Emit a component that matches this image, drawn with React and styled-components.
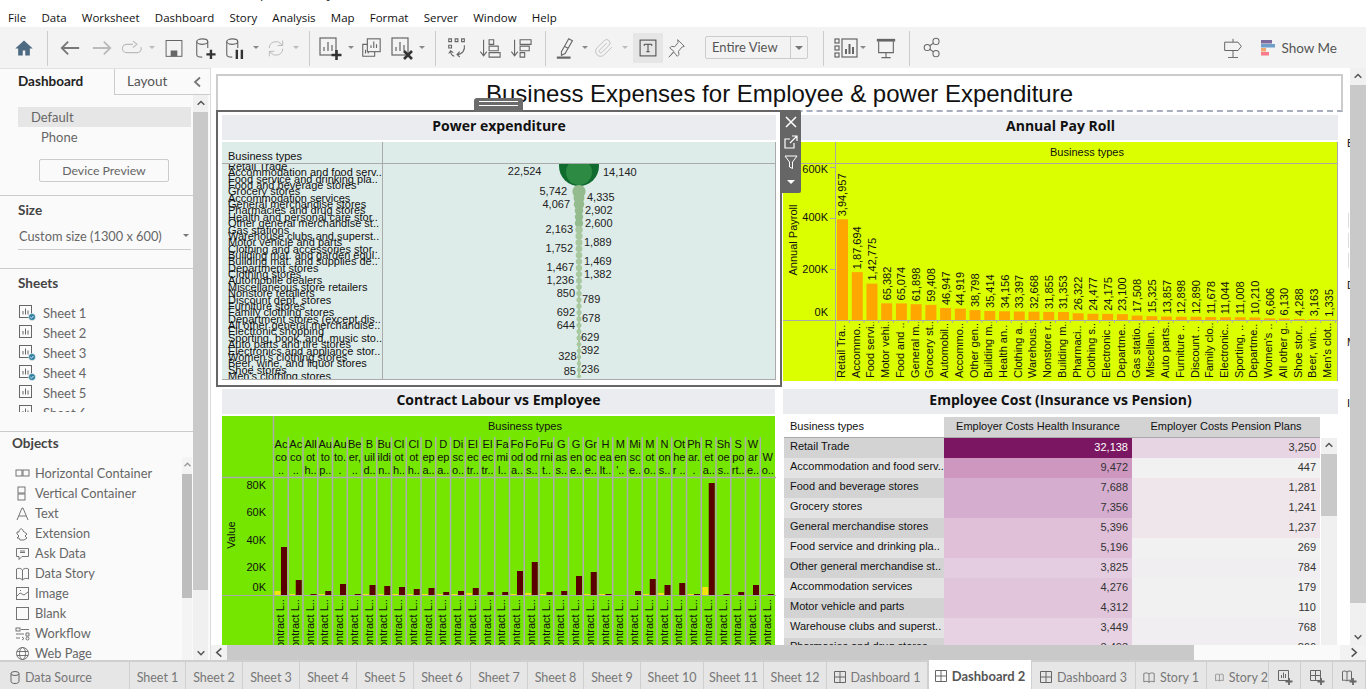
import React from 'react'
import styled, { createGlobalStyle } from 'styled-components'

const GlobalStyle = createGlobalStyle`
  html, body { margin: 0; padding: 0; background: #fff; overflow: hidden; }
  * { box-sizing: border-box; }
`

const UI_FONT = `Lato, "Open Sans", sans-serif`
const CHART_FONT = `"Liberation Sans", Arial, sans-serif`

/* ---------- data ---------- */
const menus = ['File', 'Data', 'Worksheet', 'Dashboard', 'Story', 'Analysis', 'Map', 'Format', 'Server', 'Window', 'Help']

const powerRows = ['Retail Trade', 'Accommodation and food serv..', 'Food service and drinking pla..', 'Food and beverage stores', 'Grocery stores', 'Accommodation services', 'General merchandise stores', 'Pharmacies and drug stores', 'Health and personal care stor..', 'Other general merchandise st..', 'Gas stations', 'Warehouse clubs and superst..', 'Motor vehicle and parts', 'Clothing and accessories stor..', 'Building mat. and garden equi..', 'Building mat. and supplies de..', 'Department stores', 'Clothing stores', 'Automobile dealers', 'Miscellaneous store retailers', 'Nonstore retailers', 'Discount dept. stores', 'Furniture stores', 'Family clothing stores', 'Department stores (except dis..', 'All other general merchandise..', 'Electronic shopping', 'Sporting, book, and, music sto..', 'Auto parts and tire stores', 'Electronics and appliance stor..', "Women's clothing stores", 'Beer, wine, and liquor stores', 'Shoe stores', "Men's clothing stores"]

const powerDots = [[4, 5742], [5, 4335], [6, 4067], [7, 2902], [8, 2700], [9, 2600], [10, 2163], [11, 2000], [12, 1889], [13, 1752], [14, 1600], [15, 1469], [16, 1467], [17, 1382], [18, 1236], [19, 1000], [20, 850], [21, 789], [22, 720], [23, 692], [24, 678], [25, 644], [26, 635], [27, 629], [28, 500], [29, 392], [30, 328], [31, 280], [32, 236], [33, 85]]

const powerLabels = [
  ['22,524', 541.5, 175, 'end'], ['14,140', 603, 176, 'start'], ['5,742', 567, 195, 'end'], ['4,335', 587, 201, 'start'],
  ['4,067', 570, 208, 'end'], ['2,902', 585, 214, 'start'], ['2,600', 585, 227, 'start'], ['2,163', 573, 233, 'end'],
  ['1,889', 584, 246, 'start'], ['1,752', 573, 252, 'end'], ['1,469', 584, 265, 'start'], ['1,467', 574, 271, 'end'],
  ['1,382', 584, 278, 'start'], ['1,236', 574, 284, 'end'], ['850', 575, 297, 'end'], ['789', 582, 303, 'start'],
  ['692', 575, 316, 'end'], ['678', 582, 322, 'start'], ['644', 575, 329, 'end'], ['629', 581, 341, 'start'],
  ['392', 581, 354, 'start'], ['328', 576.5, 360, 'end'], ['236', 581, 373, 'start'], ['85', 576, 375, 'end'],
]

const payroll = [
  ['Retail Tra..', 394957, '3,94,957'], ['Accommo..', 187694, '1,87,694'], ['Food servi..', 142775, '1,42,775'], ['Motor vehi..', 65382, '65,382'],
  ['Food and ..', 65074, '65,074'], ['General m..', 61898, '61,898'], ['Grocery st..', 59408, '59,408'], ['Automobil..', 46947, '46,947'],
  ['Accommo..', 44919, '44,919'], ['Other gen..', 38798, '38,798'], ['Building m..', 35414, '35,414'], ['Health an..', 34156, '34,156'],
  ['Clothing a..', 33397, '33,397'], ['Warehous..', 32668, '32,668'], ['Nonstore r..', 31855, '31,855'], ['Building m..', 31353, '31,353'],
  ['Pharmaci..', 26322, '26,322'], ['Clothing s..', 24477, '24,477'], ['Electronic ..', 24175, '24,175'], ['Departme..', 23100, '23,100'],
  ['Gas statio..', 17508, '17,508'], ['Miscellan..', 15325, '15,325'], ['Auto parts..', 13857, '13,857'], ['Furniture ..', 12898, '12,898'],
  ['Discount ..', 12890, '12,890'], ['Family clo..', 11678, '11,678'], ['Electronic..', 11044, '11,044'], ['Sporting, ..', 11008, '11,008'],
  ['Departme..', 10210, '10,210'], ["Women's ..", 6606, '6,606'], ['All other g..', 6130, '6,130'], ['Shoe stor..', 4288, '4,288'],
  ['Beer, win..', 3163, '3,163'], ["Men's clot..", 1335, '1,335'],
]

// three wrapped header lines, yellow bar px, dark bar px
const labour = [
  ['Ac', 'co', '..', 4, 48], ['Ac', 'co', '..', 1, 15], ['All', 'ot', 'h..', 0, 1], ['Au', 'to', 'p..', 1, 4], ['Au', 'to.', '.', 0, 11], ['Be', 'er,', '..', 0, 1],
  ['B', 'uil', 'd..', 1, 10], ['Bu', 'ildi', 'n..', 1, 9], ['Cl', 'ot', 'h..', 1, 8], ['Cl', 'ot', 'h..', 1, 6], ['D', 'ep', 'a..', 1, 7], ['D', 'ep', 'a..', 1, 3],
  ['Di', 'sc', 'o..', 1, 4], ['El', 'ec', 'tr..', 2, 7], ['El', 'ec', 'tr..', 0, 3], ['Fa', 'mi', 'l..', 0, 3], ['Fo', 'od', 'a..', 1, 24], ['Fo', 'od', 's..', 2, 33],
  ['Fu', 'rni', 't..', 1, 3], ['G', 'as', 's..', 0, 4], ['G', 'en', 'e..', 0, 19], ['Gr', 'oc', 'e..', 1, 23], ['H', 'ea', 'lt..', 1, 1], ['M', 'en', "'..", 0, 0],
  ['Mi', 'sc', 'e..', 0, 4], ['M', 'ot', 'o..', 1, 16], ['N', 'on', 's..', 2, 10], ['Ot', 'he', 'r ..', 0, 12], ['Ph', 'ar.', '.', 1, 1], ['R', 'et', 'a..', 8, 112],
  ['Sh', 'oe', 's..', 0, 1], ['S', 'po', 'rt..', 0, 3], ['W', 'ar', 'e..', 0, 10], ['', 'W', 'o..', 0, 1],
]

const costs = [
  ['Retail Trade', '32,138', '#7b1762', '3,250', '#e8d5e4'],
  ['Accommodation and food serv..', '9,472', '#cd97c0', '447', '#f1f1f1'],
  ['Food and beverage stores', '7,688', '#d5adcf', '1,281', '#eee6ea'],
  ['Grocery stores', '7,356', '#d5adcf', '1,241', '#eee6ea'],
  ['General merchandise stores', '5,396', '#e0bfd9', '1,237', '#eee6ea'],
  ['Food service and drinking pla..', '5,196', '#e0bfd9', '269', '#f1f1f1'],
  ['Other general merchandise st..', '3,825', '#e4cde0', '784', '#f0eef0'],
  ['Accommodation services', '4,276', '#e1c6db', '179', '#f1f1f1'],
  ['Motor vehicle and parts', '4,312', '#e1c6db', '110', '#f1f1f1'],
  ['Warehouse clubs and superst..', '3,449', '#e6d2e2', '768', '#f0eef0'],
  ['Pharmacies and drug stores', '3,403', '#e6d2e2', '866', '#f0eef0'],
]

const sheetItems = [['Sheet 1', true], ['Sheet 2', false], ['Sheet 3', true], ['Sheet 4', true], ['Sheet 5', false], ['Sheet 6', false]]

const sheetTabs = [['Sheet 1', 56], ['Sheet 2', 57], ['Sheet 3', 57], ['Sheet 4', 57], ['Sheet 5', 57], ['Sheet 6', 57], ['Sheet 7', 57], ['Sheet 8', 56], ['Sheet 9', 57], ['Sheet 10', 63], ['Sheet 11', 60], ['Sheet 12', 63]]

/* ---------- icons ---------- */
const Ico = ({ s = 20, c = '#666', w = 1.2, children }) => (
  <svg width={s} height={s} viewBox="0 0 24 24" fill="none" stroke={c} strokeWidth={w}>{children}</svg>
)
const Plus = () => <path d="M18.5 14v10M13.5 19h10" stroke="#333" strokeWidth="2.6" />

const HomeIcon = () => <Ico s={20} c="none"><path fill="#4e6a82" d="M12 3 1.5 12.5H5V21h5.5v-6h3v6H19v-8.5h3.5z" /></Ico>
const BackIcon = () => <Ico s={22} c="#777" w={2}><path d="M22 12H3M10 5l-7 7 7 7" /></Ico>
const ForwardIcon = () => <Ico s={22} c="#bbb" w={2}><path d="M2 12h19M14 5l7 7-7 7" /></Ico>
const RedoIcon = () => <Ico s={22} c="#bbb"><path d="M13 8H6a4.5 4.5 0 0 0 0 9h12a4 4 0 0 0 3.5-6M13 4.5 17.5 8 13 11.5" /></Ico>
const SaveIcon = () => <Ico s={20}><rect x="2.5" y="3" width="19" height="19" /><rect x="8" y="15" width="8" height="7" fill="#666" stroke="none" /></Ico>
const CylinderIcon = ({ children }) => <Ico s={22}><ellipse cx="9" cy="5" rx="6" ry="3" /><path d="M3 5v14c0 1.7 2.500 3 6 3M15 5v7" />{children}</Ico>
const RefreshIcon = () => <Ico s={20} c="#bbb"><path d="M4 12a8 8 0 0 1 14-5l2 2M20 13a8 8 0 0 1-14 5l-2-2M20 3v6h-6M4 22v-6h6" /></Ico>
const NewSheetIcon = () => <Ico s={24}><rect x="2" y="2" width="16" height="17" /><path d="M6 15v-4M10 15V6M14 15V9" /><Plus /></Ico>
const DupSheetIcon = () => <Ico s={22}><rect x="8" y="2" width="14" height="14" /><path d="M12 12V9M15 12V5M18 12V8M8 8H3v13h13v-5M6 18v-4M9 18v-2" /></Ico>
const ClearSheetIcon = () => <Ico s={24}><rect x="2" y="2" width="16" height="17" /><path d="M6 15v-4M10 15V6M14 15V9" /><path d="m14 15 8 8M22 15l-8 8" stroke="#333" strokeWidth="2.6" /></Ico>
const SwapIcon = () => <Ico s={22}><path d="M3 2h3v3H3zM10 2h3v3h-3zM17 2h3v3h-3zM3 9h3v3H3z" /><path d="M20 9c1 5-2 10-8 10M15 16l-3 3 3 3M5 15c0 3 1 5 4 6M3 18l2-3 3 2" /></Ico>
const SortAscIcon = () => <Ico s={22}><path d="M5 3v17M1.5 16 5 20.5 8.5 16" /><path d="M11 3h5v5h-5zM11 10h10v5H11zM11 17h12v5H11z" /></Ico>
const SortDescIcon = () => <Ico s={22}><path d="M5 3v17M1.5 16 5 20.5 8.5 16" /><path d="M11 3h12v5H11zM11 10h10v5H11zM11 17h5v5h-5z" /></Ico>
const HighlightIcon = () => <Ico s={22}><path d="M7 16 15 2l4 2-8 14-4 2zM10 10l4 2" /><path d="M2 22.5h15" strokeWidth="2.4" /></Ico>
const ClipIcon = () => <Ico s={20} c="#c2c2c2"><path d="m21.4 11-9.200 9.200a6 6 0 0 1-8.500-8.500l8.600-8.600A4 4 0 1 1 18 8.800l-8.600 8.600a2 2 0 0 1-2.800-2.800l8.500-8.500" /></Ico>
const TextBoxIcon = () => <Ico s={20} c="#444"><rect x="2.5" y="2.5" width="19" height="19" /><path d="M7.5 7.5h9M12 7.500v9M10 16.500h4M7.500 7.500v2M16.500 7.500v2" /></Ico>
const PinIcon = () => <Ico s={20} c="#777"><path d="m14 2 8 8-3 1-4 5 .5 4-2 2-4-5-6 6 6-7-5-4 2-2 4 .5 4-5z" /></Ico>
const ViewCardsIcon = () => <Ico s={24}><rect x="1" y="3" width="4" height="4" /><rect x="1" y="10" width="4" height="4" /><rect x="1" y="17" width="4" height="4" /><rect x="8" y="3" width="15" height="18" /><path d="M12 18v-5M15.500 18V8M19 18v-7" strokeWidth="2" /></Ico>
const PresentIcon = () => <Ico s={22}><path d="M2 3.500h20" strokeWidth="3" /><path d="M4 5v12h16V5M12 17v5M7 22.500h10" /></Ico>
const ShareIcon = () => <Ico s={21}><circle cx="16" cy="5" r="3.500" /><circle cx="6" cy="12" r="3.500" /><circle cx="16" cy="19" r="3.500" /><path d="m9 10 4-3M9 14l4 3" /></Ico>
const SignpostIcon = () => <Ico s={20}><path d="M12 1v4M12 15v8M6 23.500h12" /><path d="M2 5h16l4 5-4 5H2z" /></Ico>
const ShowMeIcon = () => (
  <svg width="14" height="16" viewBox="0 0 14 16">
    <rect width="11" height="3.500" fill="#7e6b9e" />
    <rect y="4" width="14" height="3.500" fill="#6f9fc9" />
    <rect y="8" width="5" height="3.500" fill="#f2a770" />
    <rect y="12" width="8" height="3.500" fill="#f77b8a" />
  </svg>
)
const Chevron = ({ dir = 'up', c = '#555', s = 10 }) => {
  const d = { up: 'M2 7l4-4 4 4', down: 'M2 4l4 4 4-4', left: 'M8 1.500 3 6l5 4.500', right: 'M4 1.500 9 6l-5 4.500' }[dir]
  return <svg width={s} height={s} viewBox="0 0 12 12" fill="none" stroke={c} strokeWidth="1.800"><path d={d} /></svg>
}
const SheetIcon = ({ done }) => (
  <svg width="17" height="16" viewBox="0 0 17 16" fill="none" stroke="#666">
    <rect x="0.500" y="0.500" width="12" height="12" />
    <path d="M4 9.500V6M6.500 9.500V3.500M9 9.500V5.500" />
    {done && <><circle cx="13" cy="12" r="3.500" fill="#2e7f9e" stroke="#fff" strokeWidth="0.600" /><path d="m11.300 12 1.200 1.200 2-2.200" stroke="#fff" strokeWidth="0.900" /></>}
  </svg>
)
const ObjIcon = ({ kind }) => {
  const shapes = {
    h: <><rect x="1" y="4" width="6" height="6" /><rect x="8" y="4" width="6" height="6" /></>,
    v: <><rect x="3" y="1" width="7" height="6" /><rect x="3" y="8" width="7" height="6" /></>,
    t: <path d="M2 14 7 2h1l5 12M4 10h7" />,
    e: <path d="M2 6h2c0-4 4-4 4-1l4 3-2 2 2 2-3 2H5l-1-2H2l2-2-2-2z" />,
    a: <><path d="M1.500 2.500h12v8H7l-3 3v-3H1.500z" /><path d="M5 6.500h5M5 5h5" /></>,
    d: <path d="M7.500 4C6 2 3 2 1.500 3v10c1.500-1 4.500-1 6 1 1.500-2 4.500-2 6-1V3c-1.500-1-4.500-1-6 1zM7.500 4v10" />,
    i: <><rect x="1.500" y="1.500" width="12" height="12" /><path d="m2 10 3-3 4 2 4-3M5 4.500h1" /></>,
    b: <rect x="1.500" y="1.500" width="12" height="12" />,
    w: <><rect x="1" y="2" width="4" height="3" /><path d="M6 3.500h8M1 8h8M11 7h3v3h-3zM1 12h4M7 11l2 1.500L7 14M11 12.500a1.500 1.500 0 1 0 3 0 1.500 1.500 0 0 0-3 0" /></>,
    p: <><circle cx="7.500" cy="7.500" r="6" /><ellipse cx="7.500" cy="7.500" rx="3" ry="6" /><path d="M2 5.500h11M2 9.500h11" /></>,
  }
  return <svg width="15" height="15" viewBox="0 0 15 15" fill="none" stroke="#666" strokeWidth="0.900">{shapes[kind]}</svg>
}
const objects = [['Horizontal Container', 'h'], ['Vertical Container', 'v'], ['Text', 't'], ['Extension', 'e'], ['Ask Data', 'a'], ['Data Story', 'd'], ['Image', 'i'], ['Blank', 'b'], ['Workflow', 'w'], ['Web Page', 'p']]
const GridTabIcon = () => <svg width="12" height="12" viewBox="0 0 12 12" fill="none" stroke="#666"><path d="M.5.5h11v11H.5zM6 .5v11M.5 6h11" /></svg>
const BookTabIcon = () => <svg width="12" height="13" viewBox="0 0 15 15" fill="none" stroke="#666"><path d="M7.500 3C6 1.500 3 1.500 1 2.500v10.500c2-1 5-1 6.500.5 1.500-1.500 4.500-1.500 6.500-.5V2.500C12 1.500 9 1.500 7.500 3zM7.500 3v10.500" /></svg>
const AddSheetTabIcon = () => <svg width="16" height="16" viewBox="0 0 16 16" fill="none" stroke="#666"><path d="M1.500 1.500h10v10h-10zM4.500 9V6M6.500 9V3.500M8.500 9V5" /><path d="M12 9v7M8.500 12.500h7" strokeWidth="1.800" /></svg>
const AddDashTabIcon = () => <svg width="16" height="16" viewBox="0 0 16 16" fill="none" stroke="#666"><path d="M1.500 1.500h10v10h-10zM6.500 1.500v10M1.500 6.500h10" /><path d="M12 9v7M8.500 12.500h7" strokeWidth="1.800" /></svg>
const AddStoryTabIcon = () => <svg width="16" height="16" viewBox="0 0 16 16" fill="none" stroke="#666"><path d="M6 3C5 1.800 3 1.800 1.500 2.500v9C3 11 5 11 6 12c1-1 3-1 4.500-.5v-9C9 1.800 7 1.800 6 3zM6 3v9" /><path d="M12 9v7M8.500 12.500h7" strokeWidth="1.800" /></svg>
const DatabaseTabIcon = () => <svg width="10" height="13" viewBox="0 0 10 13" fill="none" stroke="#666"><ellipse cx="5" cy="2.500" rx="4" ry="2" /><path d="M1 2.500v8c0 1 1.500 2 4 2s4-1 4-2v-8" /></svg>

/* ---------- page shell ---------- */
const Page = styled.div`
  width: 1366px;
  height: 689px;
  display: flex;
  flex-direction: column;
  overflow: hidden;
  background: #fff;
  font-family: ${UI_FONT};
`
const TitleStrip = styled.div`
  height: 8px;
  flex: none;
  overflow: hidden;
  padding-left: 130px;
  font: 13px "Open Sans", sans-serif;
  color: #222;
`
const TitleText = styled.div`
  margin-top: -15px;
  line-height: 16px;
`
const MenuBar = styled.div`
  height: 19px;
  display: flex;
  align-items: center;
  gap: 15.2px;
  padding-left: 8px;
  font: 11.5px "Open Sans", sans-serif;
  color: #111;
`
const Toolbar = styled.div`
  height: 41px;
  display: flex;
  align-items: stretch;
  background: #f3f3f3;
  padding: 4px 0 2px;
`
const ToolGroup = styled.div`
  width: ${p => p.$w}px;
  padding-left: ${p => p.$pl || 0}px;
  padding-bottom: 2px;
  display: flex;
  align-items: center;
  border-right: ${p => (p.$open ? 'none' : '1px solid #ccc')};
`
const Tool = styled.div`
  width: ${p => p.$w || 32}px;
  height: 30px;
  flex: none;
  display: flex;
  align-items: center;
  justify-content: center;
  background: ${p => (p.$on ? '#e6e6e6' : 'transparent')};
  margin-left: ${p => p.$ml || 0}px;
`
const Caret = styled.div`
  width: ${p => p.$w || 12}px;
  flex: none;
  display: flex;
  justify-content: center;
  &::after {
    content: "";
    border-left: 3px solid transparent;
    border-right: 3px solid transparent;
    border-top: 3px solid ${p => p.$c || '#888'};
  }
`
const ViewSelect = styled.div`
  width: 103px;
  height: 23px;
  margin-left: 16px;
  display: flex;
  border: 1px solid #ccc;
  border-radius: 2px;
  font-size: 13px;
  color: #555;
`
const ViewLabel = styled.div`
  width: 85px;
  padding-left: 6px;
  line-height: 21px;
  border-right: 1px solid #ccc;
`
const ViewArrow = styled.div`
  flex: 1;
  display: flex;
  align-items: center;
  justify-content: center;
  &::after {
    content: "";
    border-left: 4px solid transparent;
    border-right: 4px solid transparent;
    border-top: 4px solid #777;
  }
`
const ToolRight = styled.div`
  margin-left: auto;
  display: flex;
  align-items: center;
  padding: 0 29px 2px 0;
`
const ShowMe = styled.div`
  display: flex;
  align-items: center;
  gap: 6px;
  margin-left: 18px;
  font-size: 13.5px;
  color: #555;
`
const Main = styled.div`
  flex: 1;
  min-height: 0;
  display: flex;
`

/* ---------- sidebar ---------- */
const Sidebar = styled.aside`
  width: 211px;
  flex: none;
  display: flex;
  flex-direction: column;
  background: #fafafa;
  border-right: 1px solid #ddd;
  color: #666;
  font-size: 13px;
`
const SideTabs = styled.div`
  height: 27px;
  display: flex;
  align-items: center;
  border-top: 1px solid #e2e2e2;
`
const SideTab = styled.div`
  height: 100%;
  width: ${p => p.$w}px;
  display: flex;
  align-items: center;
  padding: 0 0 2px ${p => p.$pl}px;
  font-weight: ${p => (p.$on ? 700 : 400)};
  color: ${p => (p.$on ? '#222' : '#555')};
  font-size: 13.5px;
  border-left: ${p => (p.$on ? 'none' : '1px solid #ccc')};
  border-bottom: ${p => (p.$on ? 'none' : '1px solid #ccc')};
`
const SideCollapse = styled.div`
  flex: 1;
  height: 100%;
  display: flex;
  align-items: center;
  justify-content: center;
  border-bottom: 1px solid #ccc;
`
const SideBody = styled.div`
  flex: 1;
  min-height: 0;
  display: flex;
`
const SideContent = styled.div`
  width: 193px;
  flex: none;
  display: flex;
  flex-direction: column;
`
const SideScroll = styled.div`
  width: 15px;
  flex: none;
  background: #f0f0f0;
  display: flex;
  flex-direction: column;
  align-items: center;
`
const ScrollArrow = styled.div`
  height: ${p => p.$h || 17}px;
  width: 100%;
  flex: none;
  display: flex;
  align-items: center;
  justify-content: center;
`
const SideThumb = styled.div`
  width: 100%;
  height: 478px;
  background: #c9c9c9;
`
const DeviceSection = styled.section`
  height: 101px;
  padding-top: 12px;
  border-bottom: 1px solid #ccc;
`
const DeviceRow = styled.div`
  height: 20px;
  line-height: 20px;
  margin-left: 18px;
  margin-right: 2px;
  padding-left: ${p => p.$pl}px;
  background: ${p => (p.$on ? '#e6e6e6' : 'transparent')};
`
const PreviewButton = styled.div`
  width: 130px;
  height: 23px;
  margin: 12px 0 0 39px;
  border: 1px solid #ccc;
  border-radius: 2px;
  text-align: center;
  line-height: 21px;
  font-size: 12.3px;
`
const SizeSection = styled.section`
  height: 73px;
  padding: 6px 2px 0 18px;
  border-bottom: 1px solid #ccc;
`
const SectionTitle = styled.div`
  font-size: 13.5px;
  font-weight: 700;
  line-height: 16px;
  color: #444;
`
const SizeSelect = styled.div`
  display: flex;
  align-items: center;
  justify-content: space-between;
  height: 28px;
  margin-top: 4px;
  border-bottom: 1px solid #ccc;
  font-size: 12.8px;
  padding-left: 1px;
`
const SheetsSection = styled.section`
  height: 163px;
  padding: 6px 0 0 18px;
  border-bottom: 1px solid #ccc;
`
const SheetList = styled.div`
  height: 109px;
  margin-top: 12px;
  overflow: hidden;
`
const SheetRow = styled.div`
  height: 20px;
  display: flex;
  align-items: center;
  gap: 7px;
  padding-left: 1px;
`
const ObjectsSection = styled.section`
  flex: 1;
  min-height: 0;
  display: flex;
  flex-direction: column;
  padding-top: 3px;
  overflow: hidden;
`
const ObjectsTitle = styled(SectionTitle)`
  margin-left: 12px;
`
const ObjectsBody = styled.div`
  flex: 1;
  min-height: 0;
  display: flex;
  margin-top: 6px;
`
const ObjectsList = styled.div`
  width: 182px;
  flex: none;
  padding-top: 6px;
  font-size: 12.8px;
`
const ObjectRow = styled.div`
  height: 20px;
  display: flex;
  align-items: center;
  gap: 5px;
  padding-left: 15px;
`
const ObjectsScroll = styled.div`
  width: 10px;
  flex: none;
  background: #f4f4f4;
  display: flex;
  flex-direction: column;
`
const ObjectsThumb = styled.div`
  height: 124px;
  background: #bdbdbd;
`

/* ---------- workspace ---------- */
const Workspace = styled.div`
  flex: 1;
  min-width: 0;
  display: flex;
  flex-direction: column;
`
const WorkTop = styled.div`
  flex: 1;
  min-height: 0;
  display: flex;
`
const Canvas = styled.div`
  width: 1139px;
  flex: none;
  display: flex;
  overflow: hidden;
`
const Board = styled.div`
  width: 1135px;
  flex: none;
  padding: 6px 0 0 5px;
`
const EdgeStrip = styled.div`
  width: 4px;
  flex: none;
  overflow: hidden;
  font: 11px ${CHART_FONT};
  color: #111;
`
const EdgeLetter = styled.div`
  margin-top: ${p => p.$mt}px;
  line-height: 12px;
  margin-left: ${p => p.$ml || 1}px;
`
const EdgeTick = styled.div`
  margin: ${p => p.$mt}px 0 0 2px;
  width: 1px;
  height: 15px;
  background: #ddd;
`
const BoardTitle = styled.div`
  width: 1127px;
  height: 38px;
  border: 2px solid #ccc;
  border-bottom: 2px dashed #a8aebe;
  text-align: center;
  font: 24px/36px ${CHART_FONT};
  color: #111;
`
const DashGrid = styled.div`
  display: grid;
  grid-template-columns: 564px 563px;
  grid-template-rows: 275px 260px;
`
const SelectedCell = styled.div`
  position: relative;
  z-index: 1;
  margin-top: -2px;
  width: 566px;
  height: 277px;
  border: 2px solid #666;
  padding: 3px 4px 0 4px;
  background: #fff;
`
const Cell = styled.div`
  padding: ${p => p.$pt}px 5px 0 ${p => p.$pl}px;
`
const PanelTitle = styled.div`
  height: 25px;
  background: #ebecf0;
  text-align: center;
  font: 700 14px/22px "Open Sans", sans-serif;
  color: #111;
`
const ChartPanel = styled.div`
  margin-top: 2px;
  height: ${p => p.$h}px;
  background: ${p => p.$bg};
  svg { display: block; }
`
const Handle = styled.div`
  position: absolute;
  left: 256px;
  top: -14px;
  width: 49px;
  height: 14px;
  border-radius: 3px 3px 0 0;
  background: #6b6b6b;
  padding: 3px 5px 0;
`
const HandleLine = styled.div`
  height: 5px;
  border-top: 1px solid #fff;
  border-bottom: 1px solid #fff;
`
const FloatBar = styled.div`
  position: absolute;
  left: 100%;
  top: -2px;
  width: 21px;
  height: 83px;
  background: #666;
  border-radius: 0 2px 2px 0;
  display: flex;
  flex-direction: column;
  align-items: center;
  padding-top: 2px;
`
const FloatBtn = styled.div`
  height: 20px;
  display: flex;
  align-items: center;
  justify-content: center;
`
const FloatCaret = styled.div`
  margin-top: 8px;
  border-left: 4px solid transparent;
  border-right: 4px solid transparent;
  border-top: 4px solid #fff;
`
const MainScroll = styled.div`
  width: 16px;
  flex: none;
  background: #f0f0f0;
  display: flex;
  flex-direction: column;
`
const MainThumb = styled.div`
  height: 518px;
  background: #c9c9c9;
`
const MainScrollGap = styled.div`
  flex: 1;
`
const HScroll = styled.div`
  height: 15px;
  flex: none;
  display: flex;
  background: #f2f2f2;
`
const HArrow = styled.div`
  width: ${p => p.$w}px;
  flex: none;
  display: flex;
  align-items: center;
  justify-content: center;
`
const HThumb = styled.div`
  width: 967px;
  flex: none;
  background: #c9c9c9;
`
const HTrack = styled.div`
  flex: 1;
  background: #fafafa;
`

/* ---------- table ---------- */
const CostWrap = styled.div`
  margin-top: 3px;
  padding-left: 1px;
`
const CostHead = styled.div`
  display: grid;
  grid-template-columns: 160px 188px 188px;
  height: 21px;
  width: 536px;
  border-bottom: 1px solid #aaa;
`
const CostHeadName = styled.div`
  padding-left: 6px;
  font: 11px/18px ${CHART_FONT};
  color: #111;
`
const CostHeadCol = styled.div`
  background: #d3d3d3;
  text-align: center;
  font: 11px/18px ${CHART_FONT};
  color: #111;
`
const CostBody = styled.div`
  display: flex;
`
const CostRows = styled.div`
  width: 536px;
  flex: none;
`
const CostRow = styled.div`
  display: grid;
  grid-template-columns: 160px 188px 188px;
  height: 20px;
  font: 11px/17px ${CHART_FONT};
`
const CostName = styled.div`
  padding-left: 6px;
  white-space: nowrap;
  overflow: hidden;
  color: #111;
  background: ${p => (p.$odd ? '#e3e3e3' : '#d3d3d3')};
`
const CostValue = styled.div`
  padding-right: 4px;
  padding-top: 1px;
  text-align: right;
  color: ${p => (p.$strong ? '#fff' : '#333')};
  background: ${p => p.$bg};
`
const CostScroll = styled.div`
  width: 16px;
  margin-left: 1px;
  flex: none;
  background: #f0f0f0;
`
const CostThumb = styled.div`
  height: 62px;
  background: #c9c9c9;
`

/* ---------- bottom tabs ---------- */
const TabBar = styled.div`
  height: 29px;
  flex: none;
  display: flex;
  background: #e6e6e6;
  border-top: 2px solid #cfcfcf;
`
const Tab = styled.div`
  width: ${p => p.$w}px;
  flex: none;
  display: flex;
  align-items: center;
  justify-content: ${p => (p.$pl ? 'flex-start' : 'center')};
  gap: 5px;
  margin-top: ${p => (p.$on ? -2 : 0)}px;
  padding: ${p => (p.$on ? 2 : 3)}px 0 0 ${p => p.$pl || 0}px;
  background: ${p => (p.$on ? '#fff' : 'transparent')};
  border-right: 1px solid #cfcfcf;
  border-left: ${p => (p.$on ? '1px solid #cfcfcf' : 'none')};
  white-space: nowrap;
  overflow: hidden;
  font-size: ${p => (p.$on ? 13 : 12.5)}px;
  font-weight: ${p => (p.$on ? 700 : 400)};
  color: ${p => (p.$on ? '#555' : '#777')};
`

/* ---------- chart text ---------- */
const ChartText = styled.text`
  font-family: ${CHART_FONT};
  font-size: 11px;
  fill: ${p => p.$fill || '#111'};
`

const PowerChart = () => {
  const radius = v => 2 + (v / 22524) * 18
  return (
    <svg width="554" height="238" viewBox="222 142 554 238">
      <defs>
        <clipPath id="powerRows"><rect x="222" y="164" width="554" height="215" /></clipPath>
      </defs>
      <ChartText x="228" y="160">Business types</ChartText>
      <g clipPath="url(#powerRows)">
        {powerRows.map((r, i) => <ChartText key={i} x="228" y={169.8 + i * 6.37}>{r}</ChartText>)}
        <circle cx="579" cy="166" r="20" fill="#0f6b2e" />
        <circle cx="579" cy="172" r="13" fill="#2d8a43" />
      </g>
      <path d="M579 186V376" stroke="#a8c8a0" strokeWidth="2" />
      {powerDots.map(([row, v]) => (
        <circle key={row} cx="579" cy={166 + row * 6.37} r={radius(v)} fill={v > 2500 ? '#93bb8d' : '#a8c8a0'} />
      ))}
      {powerLabels.map(([t, x, y, a]) => <ChartText key={t} x={x} y={y} textAnchor={a} $fill="#222">{t}</ChartText>)}
      <path d="M222 163.5H776M382.5 142V379.5M222 379.5H776M775.5 142V380" stroke="#aaa" fill="none" />
    </svg>
  )
}

const PayrollChart = () => {
  const barX = i => 837 + i * 14.73
  return (
    <svg width="555" height="239" viewBox="783 142 555 239">
      <defs>
        <clipPath id="payLabels"><rect x="836" y="322" width="502" height="60" /></clipPath>
      </defs>
      <ChartText x="1087" y="156" textAnchor="middle">Business types</ChartText>
      <ChartText transform="rotate(-90 797 240)" x="797" y="240" textAnchor="middle">Annual Payroll</ChartText>
      {[['600K', 173], ['400K', 221], ['200K', 273], ['0K', 316]].map(([t, y]) => (
        <ChartText key={t} x="828" y={y} textAnchor="end">{t}</ChartText>
      ))}
      <path d="M830 167.5h5M830 218.5h5M830 269.5h5" stroke="#aaa" />
      {payroll.map(([label, v, text], i) => {
        const h = (v / 200000) * 51
        const top = 320 - h
        const x = barX(i)
        return (
          <g key={i}>
            <rect x={x} y={top} width="11" height={h} fill="#ffa600" />
            <ChartText transform={`rotate(-90 ${x + 9.5} ${top - 3})`} x={x + 9.5} y={top - 3}>{text}</ChartText>
            <g clipPath="url(#payLabels)">
              <ChartText transform={`rotate(-90 ${x + 8} 378)`} x={x + 8} y="378">{label}</ChartText>
            </g>
            <path d={`M${x + 12.3} 320v3`} stroke="#aaa" />
          </g>
        )
      })}
      <path d="M783 163.5H1338M783 320.5H1338M835.5 142V381M1337.5 142V381" stroke="#aaa" fill="none" />
    </svg>
  )
}

const LabourChart = () => {
  const colX = i => 273.5 + i * 14.75
  return (
    <svg width="554" height="260" viewBox="222 416 554 260">
      <ChartText x="525" y="430" textAnchor="middle">Business types</ChartText>
      {[['80K', 489], ['60K', 516], ['40K', 544], ['20K', 571], ['0K', 591]].map(([t, y]) => (
        <ChartText key={t} x="266" y={y} textAnchor="end">{t}</ChartText>
      ))}
      <ChartText transform="rotate(-90 235 535)" x="235" y="535" textAnchor="middle">Value</ChartText>
      {labour.map(([a, b, c, yellow, dark], i) => {
        const x = colX(i)
        const mid = x + 7.5
        return (
          <g key={i}>
            <path d={`M${x} ${i === 0 ? 416 : 437}V676`} stroke="#adadad" strokeWidth="1.5" />
            {a && <ChartText x={mid} y="448" textAnchor="middle">{a}</ChartText>}
            <ChartText x={mid} y="461" textAnchor="middle">{b}</ChartText>
            <ChartText x={mid} y="474" textAnchor="middle">{c}</ChartText>
            <rect x={x + 1} y={595 - yellow} width="6" height={yellow} fill="#f2e40f" />
            <rect x={x + 7.5} y={595 - dark} width="6" height={dark} fill="#5b0000" />
            <ChartText transform={`rotate(-90 ${x + 10.5} 656)`} x={x + 10.5} y="656">Contract L..</ChartText>
          </g>
        )
      })}
      <path d="M222 477.5H776" stroke="#adadad" strokeWidth="1.5" />
      <path d="M222 595.5H776" stroke="#aaa" />
    </svg>
  )
}

const App = () => (
  <Page>
    <GlobalStyle />
    <TitleStrip><TitleText>Tableau - Business Expense Analysis</TitleText></TitleStrip>
    <MenuBar>{menus.map(m => <span key={m}>{m}</span>)}</MenuBar>

    <Toolbar>
      <ToolGroup $w={48}><Tool $w={47}><HomeIcon /></Tool></ToolGroup>
      <ToolGroup $w={262} $pl={6}>
        <Tool><BackIcon /></Tool>
        <Tool><ForwardIcon /></Tool>
        <Tool $w={28}><RedoIcon /></Tool>
        <Caret $c="#bbb" />
        <Tool><SaveIcon /></Tool>
        <Tool $w={30}><CylinderIcon><Plus /></CylinderIcon></Tool>
        <Tool $w={30}><CylinderIcon><path d="M14 14v10M19.5 14v10" stroke="#333" strokeWidth="2.6" /></CylinderIcon></Tool>
        <Caret />
        <Tool $w={28}><RefreshIcon /></Tool>
        <Caret $c="#bbb" />
      </ToolGroup>
      <ToolGroup $w={126} $pl={4}>
        <Tool><NewSheetIcon /></Tool>
        <Caret $w={9} />
        <Tool><DupSheetIcon /></Tool>
        <Tool $w={30}><ClearSheetIcon /></Tool>
        <Caret $w={10} />
      </ToolGroup>
      <ToolGroup $w={110} $pl={5}>
        <Tool><SwapIcon /></Tool>
        <Tool $w={34}><SortAscIcon /></Tool>
        <Tool $w={28}><SortDescIcon /></Tool>
      </ToolGroup>
      <ToolGroup $w={278} $pl={5}>
        <Tool $w={30}><HighlightIcon /></Tool>
        <Caret $w={8} />
        <Tool $w={30}><ClipIcon /></Tool>
        <Caret $c="#bbb" />
        <Tool $w={30} $ml={2} $on><TextBoxIcon /></Tool>
        <Tool $w={26}><PinIcon /></Tool>
        <ViewSelect>
          <ViewLabel>Entire View</ViewLabel>
          <ViewArrow />
        </ViewSelect>
      </ToolGroup>
      <ToolGroup $w={86} $pl={8}>
        <Tool $w={28}><ViewCardsIcon /></Tool>
        <Caret $w={6} />
        <Tool $w={40}><PresentIcon /></Tool>
      </ToolGroup>
      <ToolGroup $w={40} $pl={6} $open>
        <Tool><ShareIcon /></Tool>
      </ToolGroup>
      <ToolRight>
        <SignpostIcon />
        <ShowMe><ShowMeIcon />Show Me</ShowMe>
      </ToolRight>
    </Toolbar>

    <Main>
      <Sidebar>
        <SideTabs>
          <SideTab $w={114} $pl={18} $on>Dashboard</SideTab>
          <SideTab $w={72} $pl={12}>Layout</SideTab>
          <SideCollapse><Chevron dir="left" c="#777" s={12} /></SideCollapse>
        </SideTabs>
        <SideBody>
          <SideContent>
            <DeviceSection>
              <DeviceRow $pl={13} $on>Default</DeviceRow>
              <DeviceRow $pl={23}>Phone</DeviceRow>
              <PreviewButton>Device Preview</PreviewButton>
            </DeviceSection>
            <SizeSection>
              <SectionTitle>Size</SectionTitle>
              <SizeSelect>Custom size (1300 x 600)<Caret $w={10} $c="#777" /></SizeSelect>
            </SizeSection>
            <SheetsSection>
              <SectionTitle>Sheets</SectionTitle>
              <SheetList>
                {sheetItems.map(([name, done]) => (
                  <SheetRow key={name}><SheetIcon done={done} />{name}</SheetRow>
                ))}
              </SheetList>
            </SheetsSection>
            <ObjectsSection>
              <ObjectsTitle>Objects</ObjectsTitle>
              <ObjectsBody>
                <ObjectsList>
                  {objects.map(([name, kind]) => (
                    <ObjectRow key={name}><ObjIcon kind={kind} />{name}</ObjectRow>
                  ))}
                </ObjectsList>
                <ObjectsScroll>
                  <ScrollArrow><Chevron dir="up" c="#999" s={9} /></ScrollArrow>
                  <ObjectsThumb />
                </ObjectsScroll>
              </ObjectsBody>
            </ObjectsSection>
          </SideContent>
          <SideScroll>
            <ScrollArrow><Chevron dir="up" /></ScrollArrow>
            <SideThumb />
            <MainScrollGap />
            <ScrollArrow $h={14}><Chevron dir="down" /></ScrollArrow>
          </SideScroll>
        </SideBody>
      </Sidebar>

      <Workspace>
        <WorkTop>
          <Canvas>
            <Board>
              <BoardTitle>Business Expenses for Employee &amp; power Expenditure</BoardTitle>
              <DashGrid>
                <SelectedCell>
                  <Handle><HandleLine /></Handle>
                  <FloatBar>
                    <FloatBtn><svg width="14" height="14" viewBox="0 0 14 14" stroke="#fff" strokeWidth="1.5"><path d="m2 2 10 10M12 2 2 12" /></svg></FloatBtn>
                    <FloatBtn><svg width="14" height="14" viewBox="0 0 14 14" fill="none" stroke="#fff" strokeWidth="1.2"><path d="M10 8v5H1V4h5M8 1h5v5M13 1 6 8" /></svg></FloatBtn>
                    <FloatBtn><svg width="14" height="15" viewBox="0 0 14 15" fill="none" stroke="#fff" strokeWidth="1"><path d="M1 1h12L8.5 7v6.500l-3-1.500V7z" /></svg></FloatBtn>
                    <FloatCaret />
                  </FloatBar>
                  <PanelTitle>Power expenditure</PanelTitle>
                  <ChartPanel $h={238} $bg="#deece9"><PowerChart /></ChartPanel>
                </SelectedCell>
                <Cell $pt={3} $pl={3}>
                  <PanelTitle>Annual Pay Roll</PanelTitle>
                  <ChartPanel $h={239} $bg="#dcff00"><PayrollChart /></ChartPanel>
                </Cell>
                <Cell $pt={2} $pl={6}>
                  <PanelTitle>Contract Labour vs Employee</PanelTitle>
                  <ChartPanel $h={260} $bg="#74e600"><LabourChart /></ChartPanel>
                </Cell>
                <Cell $pt={2} $pl={3}>
                  <PanelTitle>Employee Cost (Insurance vs Pension)</PanelTitle>
                  <CostWrap>
                    <CostHead>
                      <CostHeadName>Business types</CostHeadName>
                      <CostHeadCol>Employer Costs Health Insurance</CostHeadCol>
                      <CostHeadCol>Employer Costs Pension Plans</CostHeadCol>
                    </CostHead>
                    <CostBody>
                      <CostRows>
                        {costs.map(([name, a, aBg, b, bBg], i) => (
                          <CostRow key={name}>
                            <CostName $odd={i % 2 === 1}>{name}</CostName>
                            <CostValue $bg={aBg} $strong={i === 0}>{a}</CostValue>
                            <CostValue $bg={bBg}>{b}</CostValue>
                          </CostRow>
                        ))}
                      </CostRows>
                      <CostScroll>
                        <ScrollArrow $h={16}><Chevron dir="up" c="#555" /></ScrollArrow>
                        <CostThumb />
                      </CostScroll>
                    </CostBody>
                  </CostWrap>
                </Cell>
              </DashGrid>
            </Board>
            <EdgeStrip>
              <EdgeLetter $mt={69}>B</EdgeLetter>
              <EdgeTick $mt={64} />
              <EdgeTick $mt={5} />
              <EdgeTick $mt={5} />
              <EdgeLetter $mt={11}>D</EdgeLetter>
              <EdgeLetter $mt={45}>M</EdgeLetter>
              <EdgeLetter $mt={49}>I</EdgeLetter>
            </EdgeStrip>
          </Canvas>
          <MainScroll>
            <ScrollArrow><Chevron dir="up" /></ScrollArrow>
            <MainThumb />
            <MainScrollGap />
            <ScrollArrow><Chevron dir="down" /></ScrollArrow>
          </MainScroll>
        </WorkTop>
        <HScroll>
          <HArrow $w={16}><Chevron dir="left" s={11} /></HArrow>
          <HThumb />
          <HTrack />
          <HArrow $w={26}><Chevron dir="right" s={11} /></HArrow>
        </HScroll>
      </Workspace>
    </Main>

    <TabBar>
      <Tab $w={130} $pl={10}><DatabaseTabIcon />Data Source</Tab>
      {sheetTabs.map(([name, w]) => <Tab key={name} $w={w}>{name}</Tab>)}
      <Tab $w={101}><GridTabIcon />Dashboard 1</Tab>
      <Tab $w={104} $on><GridTabIcon />Dashboard 2</Tab>
      <Tab $w={104}><GridTabIcon />Dashboard 3</Tab>
      <Tab $w={71}><BookTabIcon />Story 1</Tab>
      <Tab $w={62} $pl={8}><BookTabIcon />Story 2</Tab>
      <Tab $w={32}><AddSheetTabIcon /></Tab>
      <Tab $w={32}><AddDashTabIcon /></Tab>
      <Tab $w={33}><AddStoryTabIcon /></Tab>
    </TabBar>
  </Page>
)

export default App
